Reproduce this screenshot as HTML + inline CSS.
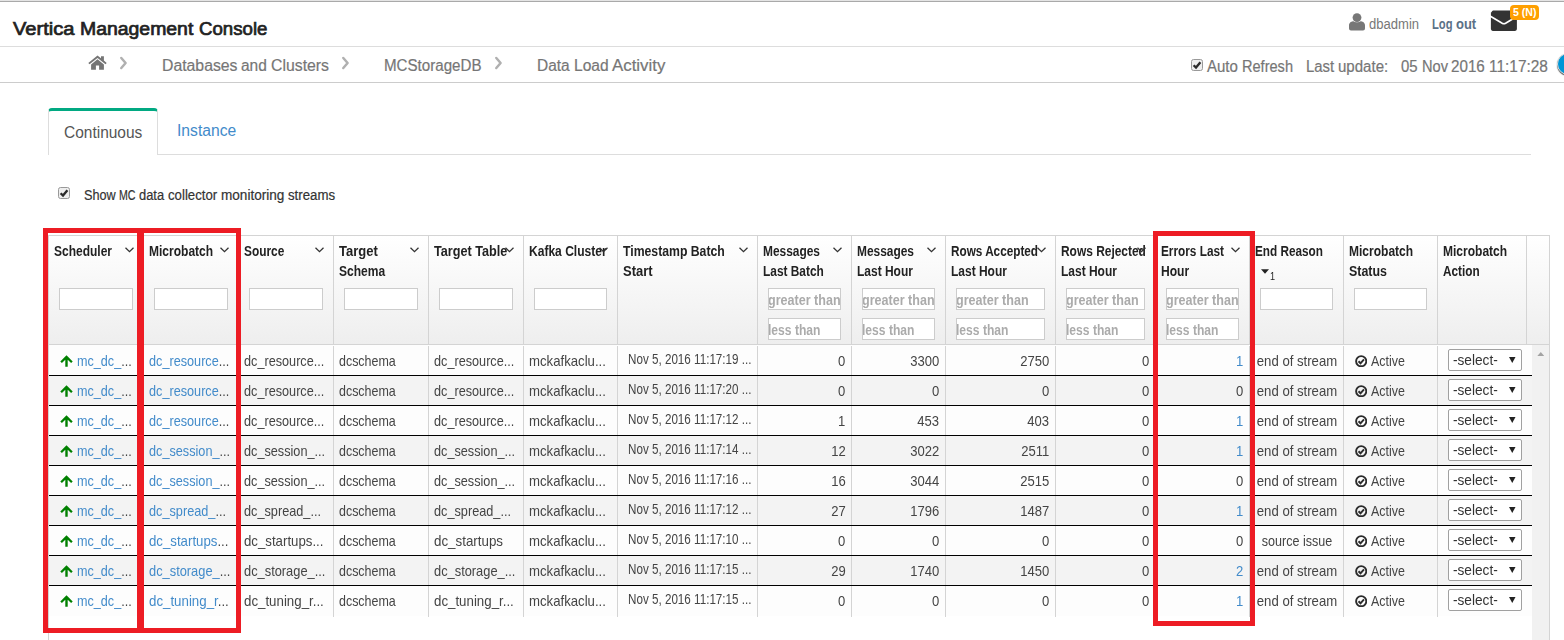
<!DOCTYPE html>
<html lang="en"><head><meta charset="utf-8"><title>Vertica Management Console</title>
<style>
html,body{margin:0;padding:0;background:#fff;}
body{width:1564px;height:640px;overflow:hidden;position:relative;font-family:"Liberation Sans",sans-serif;color:#333;}
.a{position:absolute;}
.t{position:absolute;white-space:nowrap;transform-origin:0 0;transform:scaleX(.83);line-height:1;}
.r{position:absolute;white-space:nowrap;transform-origin:100% 0;transform:scaleX(.83);line-height:1;text-align:right;}
.c{position:absolute;white-space:nowrap;transform-origin:50% 0;transform:scaleX(.83);line-height:1;text-align:center;}
.b{font-weight:bold;}
.k{-webkit-text-stroke:0.2px currentColor;}
.lk{color:#428bca;}
.hd{font-size:14px;font-weight:bold;color:#222;}
.d{font-size:15px;color:#444;}
.ts{font-size:14px;color:#444;}
.inp{position:absolute;box-sizing:border-box;border:1px solid #ccc;background:#fff;height:22px;}
.ph{font-size:15.5px;color:#ababab;}
.vl{position:absolute;width:1px;background:#d4d4d4;}
.hl{position:absolute;height:1px;}
.sel{position:absolute;box-sizing:border-box;border:1px solid #a0a0a0;border-radius:2px;background:#fff;width:74px;height:22px;}
.red{position:absolute;box-sizing:border-box;border:5px solid #ed1c24;}
</style></head>
<body>
<div class="hl" style="left:0;top:0px;width:1564px;background:#e4e4e4"></div>
<div class="hl" style="left:0;top:1px;width:1564px;background:#a9a9a9"></div>
<span class="t k" style="left:13.1px;top:19.5px;font-size:18px;color:#222;transform:scaleX(1.1175);-webkit-text-stroke:0.7px #222;">Vertica</span>
<span class="t k" style="left:80.3px;top:19.5px;font-size:18px;color:#222;transform:scaleX(1.0783);-webkit-text-stroke:0.7px #222;">Management</span>
<span class="t k" style="left:199.0px;top:19.5px;font-size:18px;color:#222;transform:scaleX(1.0356);-webkit-text-stroke:0.7px #222;">Console</span>
<div class="hl" style="left:0;top:46px;width:1564px;background:#ddd"></div>
<div class="hl" style="left:0;top:82px;width:1564px;background:#ccc"></div>
<svg class="a" style="left:1349px;top:13px" width="16" height="18" viewBox="0 0 16 18"><circle cx="8" cy="4.6" r="4.4" fill="#777"/><path d="M0 17.5 V12.5 C0 9 3 8.2 4.5 8.2 C6 9.6 10 9.6 11.5 8.2 C13 8.2 16 9 16 12.5 V15.5 Q16 17.5 14 17.5 H2 Q0 17.5 0 15.5 Z" fill="#777"/></svg>
<div class="t" style="left:1369px;top:16.5px;font-size:14px;color:#777;transform:scaleX(.932)">dbadmin</div>
<span class="t b" style="left:1432.0px;top:16.9px;font-size:14px;color:#5b7187;transform:scaleX(0.799);">Log</span>
<span class="t b" style="left:1455.8px;top:16.9px;font-size:14px;color:#5b7187;transform:scaleX(0.928);">out</span>
<svg class="a" style="left:1490px;top:10px" width="28" height="22" viewBox="0 0 28 22"><rect x="0.9" y="0.4" width="26" height="20.5" rx="1.8" fill="#333"/><path d="M-0.5 5.6 L12.2 13.3 Q13.9 14.2 15.6 13.3 L28.3 5.6" fill="none" stroke="#fff" stroke-width="1.7"/><path d="M0 0 H3 L0.4 3.6 Z" fill="#fff"/></svg>
<div class="a" style="left:1510px;top:5px;width:29px;height:15px;background:#ff9f00;border-radius:4px;"></div>
<span class="t b" style="left:1512.6px;top:7.4px;font-size:11.5px;color:#fff;transform:scaleX(0.9195);">5 (N)</span>
<svg class="a" style="left:88px;top:55px" width="19" height="15" viewBox="0 0 19 15"><path d="M9.5 0.5 L0.3 8 L1.5 9.3 L9.5 2.9 L17.5 9.3 L18.7 8 L15.9 5.6 V1.2 H13 V3.3 Z" fill="#757575"/><path d="M9.5 4.3 L3.1 9.4 V14.8 H7.9 V10.6 H11.1 V14.8 H15.9 V9.4 Z" fill="#757575"/></svg>
<svg class="a" style="left:119px;top:56px" width="9" height="14" viewBox="0 0 9 14"><path d="M2.3 2 L6.6 7 L2.3 12" fill="none" stroke="#b0b0b0" stroke-width="2.5" stroke-linecap="round" stroke-linejoin="round"/></svg>
<span class="t k" style="left:161.5px;top:58px;font-size:16px;color:#767676;transform:scaleX(0.987);">Databases</span>
<span class="t k" style="left:240.6px;top:58px;font-size:16px;color:#767676;transform:scaleX(0.9665);">and</span>
<span class="t k" style="left:270.9px;top:58px;font-size:16px;color:#767676;transform:scaleX(0.9884);">Clusters</span>
<svg class="a" style="left:341px;top:56px" width="9" height="14" viewBox="0 0 9 14"><path d="M2.3 2 L6.6 7 L2.3 12" fill="none" stroke="#b0b0b0" stroke-width="2.5" stroke-linecap="round" stroke-linejoin="round"/></svg>
<span class="t k" style="left:384.1px;top:58px;font-size:16px;color:#767676;transform:scaleX(0.9452);">MCStorageDB</span>
<svg class="a" style="left:494px;top:56px" width="9" height="14" viewBox="0 0 9 14"><path d="M2.3 2 L6.6 7 L2.3 12" fill="none" stroke="#b0b0b0" stroke-width="2.5" stroke-linecap="round" stroke-linejoin="round"/></svg>
<span class="t k" style="left:536.6px;top:58px;font-size:16px;color:#767676;transform:scaleX(0.9646);">Data</span>
<span class="t k" style="left:574.0px;top:58px;font-size:16px;color:#767676;transform:scaleX(0.9721);">Load</span>
<span class="t k" style="left:612.4px;top:58px;font-size:16px;color:#767676;transform:scaleX(1.0519);">Activity</span>
<svg class="a" style="left:1191px;top:59px" width="12" height="12" viewBox="0 0 12 12"><rect x="0.5" y="0.5" width="11" height="11" rx="2" fill="#eee" stroke="#999"/><path d="M2.6 6.2 L5 8.6 L9.4 3.2" fill="none" stroke="#2a2a2a" stroke-width="2.3"/></svg>
<span class="t k" style="left:1206.7px;top:58.7px;font-size:16px;color:#767676;transform:scaleX(0.9388);">Auto</span>
<span class="t k" style="left:1241.6px;top:58.7px;font-size:16px;color:#767676;transform:scaleX(0.9103);">Refresh</span>
<span class="t k" style="left:1306.0px;top:58.7px;font-size:16px;color:#767676;transform:scaleX(0.9292);">Last</span>
<span class="t k" style="left:1337.6px;top:58.7px;font-size:16px;color:#767676;transform:scaleX(0.9404);">update:</span>
<span class="t k" style="left:1401.2px;top:58.7px;font-size:16px;color:#767676;transform:scaleX(0.9327);">05</span>
<span class="t k" style="left:1421.8px;top:58.7px;font-size:16px;color:#767676;transform:scaleX(0.9138);">Nov</span>
<span class="t k" style="left:1451.0px;top:58.7px;font-size:16px;color:#767676;transform:scaleX(0.9496);">2016</span>
<span class="t k" style="left:1488.8px;top:58.7px;font-size:16px;color:#767676;transform:scaleX(0.9641);">11:17:28</span>
<div class="a" style="left:1556.5px;top:52.7px;width:22px;height:22px;border-radius:11px;background:#0096d6;border:1.5px solid #ddd;box-sizing:border-box;box-shadow:0 1px 1px #555"></div>
<div class="hl" style="left:48px;top:154px;width:1483px;background:#ddd"></div>
<div class="a" style="left:48px;top:108px;width:110px;height:47px;box-sizing:border-box;border:1px solid #ddd;border-bottom:none;border-top:3px solid #01a982;border-radius:4px 4px 0 0;background:#fff"></div>
<div class="t" style="left:64px;top:125px;font-size:16px;color:#555;transform:scaleX(.9675)">Continuous</div>
<div class="t lk" style="left:176.5px;top:123px;font-size:16px;transform:scaleX(.979)">Instance</div>
<svg class="a" style="left:58px;top:187px" width="12" height="12" viewBox="0 0 12 12"><rect x="0.5" y="0.5" width="11" height="11" rx="2" fill="#eee" stroke="#999"/><path d="M2.6 6.2 L5 8.6 L9.4 3.2" fill="none" stroke="#2a2a2a" stroke-width="2.3"/></svg>
<span class="t k" style="left:84.0px;top:188.3px;font-size:14px;color:#333;transform:scaleX(0.9051);">Show</span>
<span class="t k" style="left:118.9px;top:188.3px;font-size:14px;color:#333;transform:scaleX(0.7578);">MC</span>
<span class="t k" style="left:139.0px;top:188.3px;font-size:14px;color:#333;transform:scaleX(0.921);">data</span>
<span class="t k" style="left:167.6px;top:188.3px;font-size:14px;color:#333;transform:scaleX(0.9437);">collector</span>
<span class="t k" style="left:220.8px;top:188.3px;font-size:14px;color:#333;transform:scaleX(0.9698);">monitoring</span>
<span class="t k" style="left:287.8px;top:188.3px;font-size:14px;color:#333;transform:scaleX(0.946);">streams</span>
<div class="a" style="left:0;top:0;width:1564px;height:640px;will-change:transform">
<div class="a" style="left:48px;top:235px;width:1502px;height:110px;box-sizing:border-box;border:1px solid #d4d4d4;background:linear-gradient(#fff,#eee)"></div>
<div class="vl" style="left:48px;top:235px;height:405px"></div>
<div class="vl" style="left:1549px;top:235px;height:405px"></div>
<div class="a" style="left:1532px;top:345px;width:17px;height:295px;background:#f1f1f1"></div>
<svg class="a" style="left:1536.7px;top:351.8px" width="7.6" height="4.4" viewBox="0 0 7.6 4.4"><path d="M0 4.4 L3.8 0 L7.6 4.4 Z" fill="#a3a3a3"/></svg>
<div class="vl" style="left:143px;top:236px;height:108px"></div>
<div class="vl" style="left:238px;top:236px;height:108px"></div>
<div class="vl" style="left:333px;top:236px;height:108px"></div>
<div class="vl" style="left:428px;top:236px;height:108px"></div>
<div class="vl" style="left:523px;top:236px;height:108px"></div>
<div class="vl" style="left:617px;top:236px;height:108px"></div>
<div class="vl" style="left:757px;top:236px;height:108px"></div>
<div class="vl" style="left:851px;top:236px;height:108px"></div>
<div class="vl" style="left:945px;top:236px;height:108px"></div>
<div class="vl" style="left:1055px;top:236px;height:108px"></div>
<div class="vl" style="left:1155px;top:236px;height:108px"></div>
<div class="vl" style="left:1249px;top:236px;height:108px"></div>
<div class="vl" style="left:1343px;top:236px;height:108px"></div>
<div class="vl" style="left:1437px;top:236px;height:108px"></div>
<div class="vl" style="left:1526px;top:236px;height:108px"></div>
<div class="t hd" style="left:53.5px;top:244.4px;transform:scaleX(0.8568)">Scheduler</div>
<svg class="a" style="left:125px;top:247px" width="9" height="6" viewBox="0 0 9 6"><path d="M0.5 0.7 L4.5 4.7 L8.5 0.7" fill="none" stroke="#333" stroke-width="1.25"/></svg>
<div class="inp" style="left:59px;top:288px;width:74px"></div>
<div class="t hd" style="left:148.5px;top:244.4px;transform:scaleX(0.8583)">Microbatch</div>
<svg class="a" style="left:220px;top:247px" width="9" height="6" viewBox="0 0 9 6"><path d="M0.5 0.7 L4.5 4.7 L8.5 0.7" fill="none" stroke="#333" stroke-width="1.25"/></svg>
<div class="inp" style="left:154px;top:288px;width:74px"></div>
<div class="t hd" style="left:243.5px;top:244.4px;transform:scaleX(0.849)">Source</div>
<svg class="a" style="left:315px;top:247px" width="9" height="6" viewBox="0 0 9 6"><path d="M0.5 0.7 L4.5 4.7 L8.5 0.7" fill="none" stroke="#333" stroke-width="1.25"/></svg>
<div class="inp" style="left:249px;top:288px;width:74px"></div>
<div class="t hd" style="left:338.5px;top:244.4px;transform:scaleX(0.9293)">Target</div>
<div class="t hd" style="left:338.5px;top:264.4px;transform:scaleX(0.8585)">Schema</div>
<svg class="a" style="left:410px;top:247px" width="9" height="6" viewBox="0 0 9 6"><path d="M0.5 0.7 L4.5 4.7 L8.5 0.7" fill="none" stroke="#333" stroke-width="1.25"/></svg>
<div class="inp" style="left:344px;top:288px;width:74px"></div>
<div class="t hd" style="left:433.5px;top:244.4px;transform:scaleX(0.903)">Target Table</div>
<svg class="a" style="left:505px;top:247px" width="9" height="6" viewBox="0 0 9 6"><path d="M0.5 0.7 L4.5 4.7 L8.5 0.7" fill="none" stroke="#333" stroke-width="1.25"/></svg>
<div class="inp" style="left:439px;top:288px;width:74px"></div>
<div class="t hd" style="left:528.5px;top:244.4px;transform:scaleX(0.8608)">Kafka Cluster</div>
<svg class="a" style="left:599px;top:247px" width="9" height="6" viewBox="0 0 9 6"><path d="M0.5 0.7 L4.5 4.7 L8.5 0.7" fill="none" stroke="#333" stroke-width="1.25"/></svg>
<div class="inp" style="left:534px;top:288px;width:73px"></div>
<div class="t hd" style="left:622.5px;top:244.4px;transform:scaleX(0.8741)">Timestamp Batch</div>
<div class="t hd" style="left:622.5px;top:264.4px;transform:scaleX(0.9279)">Start</div>
<svg class="a" style="left:739px;top:247px" width="9" height="6" viewBox="0 0 9 6"><path d="M0.5 0.7 L4.5 4.7 L8.5 0.7" fill="none" stroke="#333" stroke-width="1.25"/></svg>
<div class="t hd" style="left:762.5px;top:244.4px;transform:scaleX(0.8515)">Messages</div>
<div class="t hd" style="left:762.5px;top:264.4px;transform:scaleX(0.8494)">Last Batch</div>
<svg class="a" style="left:833px;top:247px" width="9" height="6" viewBox="0 0 9 6"><path d="M0.5 0.7 L4.5 4.7 L8.5 0.7" fill="none" stroke="#333" stroke-width="1.25"/></svg>
<div class="inp" style="left:768px;top:288px;width:73px;overflow:hidden"><div class="t ph b" style="left:-0.7px;top:3.1px;transform:scaleX(0.8104)">greater than</div></div>
<div class="inp" style="left:768px;top:318px;width:73px;overflow:hidden"><div class="t ph b" style="left:-0.7px;top:3.1px;transform:scaleX(0.7813)">less than</div></div>
<div class="t hd" style="left:856.5px;top:244.4px;transform:scaleX(0.8515)">Messages</div>
<div class="t hd" style="left:856.5px;top:264.4px;transform:scaleX(0.8555)">Last Hour</div>
<svg class="a" style="left:927px;top:247px" width="9" height="6" viewBox="0 0 9 6"><path d="M0.5 0.7 L4.5 4.7 L8.5 0.7" fill="none" stroke="#333" stroke-width="1.25"/></svg>
<div class="inp" style="left:862px;top:288px;width:73px;overflow:hidden"><div class="t ph b" style="left:-0.7px;top:3.1px;transform:scaleX(0.8104)">greater than</div></div>
<div class="inp" style="left:862px;top:318px;width:73px;overflow:hidden"><div class="t ph b" style="left:-0.7px;top:3.1px;transform:scaleX(0.7813)">less than</div></div>
<div class="t hd" style="left:950.5px;top:244.4px;transform:scaleX(0.8386)">Rows Accepted</div>
<div class="t hd" style="left:950.5px;top:264.4px;transform:scaleX(0.8555)">Last Hour</div>
<svg class="a" style="left:1037px;top:247px" width="9" height="6" viewBox="0 0 9 6"><path d="M0.5 0.7 L4.5 4.7 L8.5 0.7" fill="none" stroke="#333" stroke-width="1.25"/></svg>
<div class="inp" style="left:956px;top:288px;width:89px;overflow:hidden"><div class="t ph b" style="left:-0.7px;top:3.1px;transform:scaleX(0.8104)">greater than</div></div>
<div class="inp" style="left:956px;top:318px;width:89px;overflow:hidden"><div class="t ph b" style="left:-0.7px;top:3.1px;transform:scaleX(0.7813)">less than</div></div>
<div class="t hd" style="left:1060.5px;top:244.4px;transform:scaleX(0.8524)">Rows Rejected</div>
<div class="t hd" style="left:1060.5px;top:264.4px;transform:scaleX(0.8555)">Last Hour</div>
<svg class="a" style="left:1137px;top:247px" width="9" height="6" viewBox="0 0 9 6"><path d="M0.5 0.7 L4.5 4.7 L8.5 0.7" fill="none" stroke="#333" stroke-width="1.25"/></svg>
<div class="inp" style="left:1066px;top:288px;width:79px;overflow:hidden"><div class="t ph b" style="left:-0.7px;top:3.1px;transform:scaleX(0.8104)">greater than</div></div>
<div class="inp" style="left:1066px;top:318px;width:79px;overflow:hidden"><div class="t ph b" style="left:-0.7px;top:3.1px;transform:scaleX(0.7813)">less than</div></div>
<div class="t hd" style="left:1160.5px;top:244.4px;transform:scaleX(0.8433)">Errors Last</div>
<div class="t hd" style="left:1160.5px;top:264.4px;transform:scaleX(0.8633)">Hour</div>
<svg class="a" style="left:1231px;top:247px" width="9" height="6" viewBox="0 0 9 6"><path d="M0.5 0.7 L4.5 4.7 L8.5 0.7" fill="none" stroke="#333" stroke-width="1.25"/></svg>
<div class="inp" style="left:1166px;top:288px;width:73px;overflow:hidden"><div class="t ph b" style="left:-0.7px;top:3.1px;transform:scaleX(0.8104)">greater than</div></div>
<div class="inp" style="left:1166px;top:318px;width:73px;overflow:hidden"><div class="t ph b" style="left:-0.7px;top:3.1px;transform:scaleX(0.7813)">less than</div></div>
<div class="t hd" style="left:1254.5px;top:244.4px;transform:scaleX(0.8404)">End Reason</div>
<div class="inp" style="left:1260px;top:288px;width:73px"></div>
<div class="t hd" style="left:1348.5px;top:244.4px;transform:scaleX(0.8583)">Microbatch</div>
<div class="t hd" style="left:1348.5px;top:264.4px;transform:scaleX(0.8857)">Status</div>
<div class="inp" style="left:1354px;top:288px;width:73px"></div>
<div class="t hd" style="left:1442.5px;top:244.4px;transform:scaleX(0.8583)">Microbatch</div>
<div class="t hd" style="left:1442.5px;top:264.4px;transform:scaleX(0.8403)">Action</div>
<svg class="a" style="left:1261px;top:269px" width="8" height="5" viewBox="0 0 8 5"><path d="M0 0.3 H8 L4 4.7 Z" fill="#222"/></svg>
<div class="t" style="left:1269.5px;top:270.5px;font-size:11px;color:#222">1</div>
<div class="a" style="left:49px;top:345px;width:1483px;height:30px;background:#fdfdfd"></div>
<div class="vl" style="left:143px;top:346px;height:29px"></div>
<div class="vl" style="left:238px;top:346px;height:29px"></div>
<div class="vl" style="left:333px;top:346px;height:29px"></div>
<div class="vl" style="left:428px;top:346px;height:29px"></div>
<div class="vl" style="left:523px;top:346px;height:29px"></div>
<div class="vl" style="left:617px;top:346px;height:29px"></div>
<div class="vl" style="left:757px;top:346px;height:29px"></div>
<div class="vl" style="left:851px;top:346px;height:29px"></div>
<div class="vl" style="left:945px;top:346px;height:29px"></div>
<div class="vl" style="left:1055px;top:346px;height:29px"></div>
<div class="vl" style="left:1155px;top:346px;height:29px"></div>
<div class="vl" style="left:1249px;top:346px;height:29px"></div>
<div class="vl" style="left:1343px;top:346px;height:29px"></div>
<div class="vl" style="left:1437px;top:346px;height:29px"></div>
<svg class="a" style="left:60px;top:355px" width="13" height="12" viewBox="0 0 13 12"><path d="M6.5 0.3 L0.3 6.5 L1.9 8.1 L5.3 4.8 V11.7 H7.7 V4.8 L11.1 8.1 L12.7 6.5 Z" fill="#008000"/></svg>
<div class="t d" style="left:77px;top:353px;transform:scaleX(0.8412)"><span class="lk">mc_dc_</span>...</div>
<div class="t d" style="left:149px;top:353px;transform:scaleX(0.8448)"><span class="lk">dc_resource</span>...</div>
<div class="t d" style="left:244px;top:353px;transform:scaleX(0.8448)">dc_resource...</div>
<div class="t d" style="left:339px;top:353px">dcschema</div>
<div class="t d" style="left:434px;top:353px;transform:scaleX(0.8448)">dc_resource...</div>
<div class="t d" style="left:529px;top:353px;transform:scaleX(0.8786)">mckafkaclu...</div>
<div class="t ts" style="left:627.7px;top:352px;transform:scaleX(.832)">Nov 5, 2016 11:17:19 ...</div>
<div class="r d" style="right:718.5px;top:353px;transform:scaleX(.87)">0</div>
<div class="r d" style="right:624.5px;top:353px;transform:scaleX(.87)">3300</div>
<div class="r d" style="right:514.5px;top:353px;transform:scaleX(.87)">2750</div>
<div class="r d" style="right:414.5px;top:353px;transform:scaleX(.87)">0</div>
<div class="r d" style="right:320.5px;top:353px;transform:scaleX(.87)"><span class="lk">1</span></div>
<div class="c d" style="left:1250px;width:94px;top:353px;transform:scaleX(0.877)">end of stream</div>
<svg class="a" style="left:1354.8px;top:354.8px" width="12.4" height="12.4" viewBox="0 0 12.4 12.4"><circle cx="6.2" cy="6.2" r="5.1" fill="none" stroke="#2b2b2b" stroke-width="1.9"/><path d="M3.5 6.3 L5.5 8.3 L9 4.3" fill="none" stroke="#2b2b2b" stroke-width="1.9"/></svg>
<div class="t d" style="left:1371px;top:353px">Active</div>
<div class="sel" style="left:1448px;top:349px"><div class="t d" style="left:4px;top:2px;color:#333;transform:scaleX(.91)">-select-</div><svg class="a" style="left:60px;top:6.8px" width="6.5" height="6" viewBox="0 0 6.5 6"><path d="M0 0 H6.5 L3.25 6 Z" fill="#222"/></svg></div>
<div class="a" style="left:49px;top:375px;width:1483px;height:30px;background:#f3f3f3"></div>
<div class="vl" style="left:143px;top:376px;height:29px"></div>
<div class="vl" style="left:238px;top:376px;height:29px"></div>
<div class="vl" style="left:333px;top:376px;height:29px"></div>
<div class="vl" style="left:428px;top:376px;height:29px"></div>
<div class="vl" style="left:523px;top:376px;height:29px"></div>
<div class="vl" style="left:617px;top:376px;height:29px"></div>
<div class="vl" style="left:757px;top:376px;height:29px"></div>
<div class="vl" style="left:851px;top:376px;height:29px"></div>
<div class="vl" style="left:945px;top:376px;height:29px"></div>
<div class="vl" style="left:1055px;top:376px;height:29px"></div>
<div class="vl" style="left:1155px;top:376px;height:29px"></div>
<div class="vl" style="left:1249px;top:376px;height:29px"></div>
<div class="vl" style="left:1343px;top:376px;height:29px"></div>
<div class="vl" style="left:1437px;top:376px;height:29px"></div>
<svg class="a" style="left:60px;top:385px" width="13" height="12" viewBox="0 0 13 12"><path d="M6.5 0.3 L0.3 6.5 L1.9 8.1 L5.3 4.8 V11.7 H7.7 V4.8 L11.1 8.1 L12.7 6.5 Z" fill="#008000"/></svg>
<div class="t d" style="left:77px;top:383px;transform:scaleX(0.8412)"><span class="lk">mc_dc_</span>...</div>
<div class="t d" style="left:149px;top:383px;transform:scaleX(0.8448)"><span class="lk">dc_resource</span>...</div>
<div class="t d" style="left:244px;top:383px;transform:scaleX(0.8448)">dc_resource...</div>
<div class="t d" style="left:339px;top:383px">dcschema</div>
<div class="t d" style="left:434px;top:383px;transform:scaleX(0.8448)">dc_resource...</div>
<div class="t d" style="left:529px;top:383px;transform:scaleX(0.8786)">mckafkaclu...</div>
<div class="t ts" style="left:627.7px;top:382px;transform:scaleX(.832)">Nov 5, 2016 11:17:20 ...</div>
<div class="r d" style="right:718.5px;top:383px;transform:scaleX(.87)">0</div>
<div class="r d" style="right:624.5px;top:383px;transform:scaleX(.87)">0</div>
<div class="r d" style="right:514.5px;top:383px;transform:scaleX(.87)">0</div>
<div class="r d" style="right:414.5px;top:383px;transform:scaleX(.87)">0</div>
<div class="r d" style="right:320.5px;top:383px;transform:scaleX(.87)">0</div>
<div class="c d" style="left:1250px;width:94px;top:383px;transform:scaleX(0.877)">end of stream</div>
<svg class="a" style="left:1354.8px;top:384.8px" width="12.4" height="12.4" viewBox="0 0 12.4 12.4"><circle cx="6.2" cy="6.2" r="5.1" fill="none" stroke="#2b2b2b" stroke-width="1.9"/><path d="M3.5 6.3 L5.5 8.3 L9 4.3" fill="none" stroke="#2b2b2b" stroke-width="1.9"/></svg>
<div class="t d" style="left:1371px;top:383px">Active</div>
<div class="sel" style="left:1448px;top:379px"><div class="t d" style="left:4px;top:2px;color:#333;transform:scaleX(.91)">-select-</div><svg class="a" style="left:60px;top:6.8px" width="6.5" height="6" viewBox="0 0 6.5 6"><path d="M0 0 H6.5 L3.25 6 Z" fill="#222"/></svg></div>
<div class="a" style="left:49px;top:405px;width:1483px;height:30px;background:#fdfdfd"></div>
<div class="vl" style="left:143px;top:406px;height:29px"></div>
<div class="vl" style="left:238px;top:406px;height:29px"></div>
<div class="vl" style="left:333px;top:406px;height:29px"></div>
<div class="vl" style="left:428px;top:406px;height:29px"></div>
<div class="vl" style="left:523px;top:406px;height:29px"></div>
<div class="vl" style="left:617px;top:406px;height:29px"></div>
<div class="vl" style="left:757px;top:406px;height:29px"></div>
<div class="vl" style="left:851px;top:406px;height:29px"></div>
<div class="vl" style="left:945px;top:406px;height:29px"></div>
<div class="vl" style="left:1055px;top:406px;height:29px"></div>
<div class="vl" style="left:1155px;top:406px;height:29px"></div>
<div class="vl" style="left:1249px;top:406px;height:29px"></div>
<div class="vl" style="left:1343px;top:406px;height:29px"></div>
<div class="vl" style="left:1437px;top:406px;height:29px"></div>
<svg class="a" style="left:60px;top:415px" width="13" height="12" viewBox="0 0 13 12"><path d="M6.5 0.3 L0.3 6.5 L1.9 8.1 L5.3 4.8 V11.7 H7.7 V4.8 L11.1 8.1 L12.7 6.5 Z" fill="#008000"/></svg>
<div class="t d" style="left:77px;top:413px;transform:scaleX(0.8412)"><span class="lk">mc_dc_</span>...</div>
<div class="t d" style="left:149px;top:413px;transform:scaleX(0.8448)"><span class="lk">dc_resource</span>...</div>
<div class="t d" style="left:244px;top:413px;transform:scaleX(0.8448)">dc_resource...</div>
<div class="t d" style="left:339px;top:413px">dcschema</div>
<div class="t d" style="left:434px;top:413px;transform:scaleX(0.8448)">dc_resource...</div>
<div class="t d" style="left:529px;top:413px;transform:scaleX(0.8786)">mckafkaclu...</div>
<div class="t ts" style="left:627.7px;top:412px;transform:scaleX(.832)">Nov 5, 2016 11:17:12 ...</div>
<div class="r d" style="right:718.5px;top:413px;transform:scaleX(.87)">1</div>
<div class="r d" style="right:624.5px;top:413px;transform:scaleX(.87)">453</div>
<div class="r d" style="right:514.5px;top:413px;transform:scaleX(.87)">403</div>
<div class="r d" style="right:414.5px;top:413px;transform:scaleX(.87)">0</div>
<div class="r d" style="right:320.5px;top:413px;transform:scaleX(.87)"><span class="lk">1</span></div>
<div class="c d" style="left:1250px;width:94px;top:413px;transform:scaleX(0.877)">end of stream</div>
<svg class="a" style="left:1354.8px;top:414.8px" width="12.4" height="12.4" viewBox="0 0 12.4 12.4"><circle cx="6.2" cy="6.2" r="5.1" fill="none" stroke="#2b2b2b" stroke-width="1.9"/><path d="M3.5 6.3 L5.5 8.3 L9 4.3" fill="none" stroke="#2b2b2b" stroke-width="1.9"/></svg>
<div class="t d" style="left:1371px;top:413px">Active</div>
<div class="sel" style="left:1448px;top:409px"><div class="t d" style="left:4px;top:2px;color:#333;transform:scaleX(.91)">-select-</div><svg class="a" style="left:60px;top:6.8px" width="6.5" height="6" viewBox="0 0 6.5 6"><path d="M0 0 H6.5 L3.25 6 Z" fill="#222"/></svg></div>
<div class="a" style="left:49px;top:435px;width:1483px;height:30px;background:#f3f3f3"></div>
<div class="vl" style="left:143px;top:436px;height:29px"></div>
<div class="vl" style="left:238px;top:436px;height:29px"></div>
<div class="vl" style="left:333px;top:436px;height:29px"></div>
<div class="vl" style="left:428px;top:436px;height:29px"></div>
<div class="vl" style="left:523px;top:436px;height:29px"></div>
<div class="vl" style="left:617px;top:436px;height:29px"></div>
<div class="vl" style="left:757px;top:436px;height:29px"></div>
<div class="vl" style="left:851px;top:436px;height:29px"></div>
<div class="vl" style="left:945px;top:436px;height:29px"></div>
<div class="vl" style="left:1055px;top:436px;height:29px"></div>
<div class="vl" style="left:1155px;top:436px;height:29px"></div>
<div class="vl" style="left:1249px;top:436px;height:29px"></div>
<div class="vl" style="left:1343px;top:436px;height:29px"></div>
<div class="vl" style="left:1437px;top:436px;height:29px"></div>
<svg class="a" style="left:60px;top:445px" width="13" height="12" viewBox="0 0 13 12"><path d="M6.5 0.3 L0.3 6.5 L1.9 8.1 L5.3 4.8 V11.7 H7.7 V4.8 L11.1 8.1 L12.7 6.5 Z" fill="#008000"/></svg>
<div class="t d" style="left:77px;top:443px;transform:scaleX(0.8412)"><span class="lk">mc_dc_</span>...</div>
<div class="t d" style="left:149px;top:443px;transform:scaleX(0.8458)"><span class="lk">dc_session_</span>...</div>
<div class="t d" style="left:244px;top:443px;transform:scaleX(0.8458)">dc_session_...</div>
<div class="t d" style="left:339px;top:443px">dcschema</div>
<div class="t d" style="left:434px;top:443px;transform:scaleX(0.8458)">dc_session_...</div>
<div class="t d" style="left:529px;top:443px;transform:scaleX(0.8786)">mckafkaclu...</div>
<div class="t ts" style="left:627.7px;top:442px;transform:scaleX(.832)">Nov 5, 2016 11:17:14 ...</div>
<div class="r d" style="right:718.5px;top:443px;transform:scaleX(.87)">12</div>
<div class="r d" style="right:624.5px;top:443px;transform:scaleX(.87)">3022</div>
<div class="r d" style="right:514.5px;top:443px;transform:scaleX(.87)">2511</div>
<div class="r d" style="right:414.5px;top:443px;transform:scaleX(.87)">0</div>
<div class="r d" style="right:320.5px;top:443px;transform:scaleX(.87)"><span class="lk">1</span></div>
<div class="c d" style="left:1250px;width:94px;top:443px;transform:scaleX(0.877)">end of stream</div>
<svg class="a" style="left:1354.8px;top:444.8px" width="12.4" height="12.4" viewBox="0 0 12.4 12.4"><circle cx="6.2" cy="6.2" r="5.1" fill="none" stroke="#2b2b2b" stroke-width="1.9"/><path d="M3.5 6.3 L5.5 8.3 L9 4.3" fill="none" stroke="#2b2b2b" stroke-width="1.9"/></svg>
<div class="t d" style="left:1371px;top:443px">Active</div>
<div class="sel" style="left:1448px;top:439px"><div class="t d" style="left:4px;top:2px;color:#333;transform:scaleX(.91)">-select-</div><svg class="a" style="left:60px;top:6.8px" width="6.5" height="6" viewBox="0 0 6.5 6"><path d="M0 0 H6.5 L3.25 6 Z" fill="#222"/></svg></div>
<div class="a" style="left:49px;top:465px;width:1483px;height:30px;background:#fdfdfd"></div>
<div class="vl" style="left:143px;top:466px;height:29px"></div>
<div class="vl" style="left:238px;top:466px;height:29px"></div>
<div class="vl" style="left:333px;top:466px;height:29px"></div>
<div class="vl" style="left:428px;top:466px;height:29px"></div>
<div class="vl" style="left:523px;top:466px;height:29px"></div>
<div class="vl" style="left:617px;top:466px;height:29px"></div>
<div class="vl" style="left:757px;top:466px;height:29px"></div>
<div class="vl" style="left:851px;top:466px;height:29px"></div>
<div class="vl" style="left:945px;top:466px;height:29px"></div>
<div class="vl" style="left:1055px;top:466px;height:29px"></div>
<div class="vl" style="left:1155px;top:466px;height:29px"></div>
<div class="vl" style="left:1249px;top:466px;height:29px"></div>
<div class="vl" style="left:1343px;top:466px;height:29px"></div>
<div class="vl" style="left:1437px;top:466px;height:29px"></div>
<svg class="a" style="left:60px;top:475px" width="13" height="12" viewBox="0 0 13 12"><path d="M6.5 0.3 L0.3 6.5 L1.9 8.1 L5.3 4.8 V11.7 H7.7 V4.8 L11.1 8.1 L12.7 6.5 Z" fill="#008000"/></svg>
<div class="t d" style="left:77px;top:473px;transform:scaleX(0.8412)"><span class="lk">mc_dc_</span>...</div>
<div class="t d" style="left:149px;top:473px;transform:scaleX(0.8458)"><span class="lk">dc_session_</span>...</div>
<div class="t d" style="left:244px;top:473px;transform:scaleX(0.8458)">dc_session_...</div>
<div class="t d" style="left:339px;top:473px">dcschema</div>
<div class="t d" style="left:434px;top:473px;transform:scaleX(0.8458)">dc_session_...</div>
<div class="t d" style="left:529px;top:473px;transform:scaleX(0.8786)">mckafkaclu...</div>
<div class="t ts" style="left:627.7px;top:472px;transform:scaleX(.832)">Nov 5, 2016 11:17:16 ...</div>
<div class="r d" style="right:718.5px;top:473px;transform:scaleX(.87)">16</div>
<div class="r d" style="right:624.5px;top:473px;transform:scaleX(.87)">3044</div>
<div class="r d" style="right:514.5px;top:473px;transform:scaleX(.87)">2515</div>
<div class="r d" style="right:414.5px;top:473px;transform:scaleX(.87)">0</div>
<div class="r d" style="right:320.5px;top:473px;transform:scaleX(.87)">0</div>
<div class="c d" style="left:1250px;width:94px;top:473px;transform:scaleX(0.877)">end of stream</div>
<svg class="a" style="left:1354.8px;top:474.8px" width="12.4" height="12.4" viewBox="0 0 12.4 12.4"><circle cx="6.2" cy="6.2" r="5.1" fill="none" stroke="#2b2b2b" stroke-width="1.9"/><path d="M3.5 6.3 L5.5 8.3 L9 4.3" fill="none" stroke="#2b2b2b" stroke-width="1.9"/></svg>
<div class="t d" style="left:1371px;top:473px">Active</div>
<div class="sel" style="left:1448px;top:469px"><div class="t d" style="left:4px;top:2px;color:#333;transform:scaleX(.91)">-select-</div><svg class="a" style="left:60px;top:6.8px" width="6.5" height="6" viewBox="0 0 6.5 6"><path d="M0 0 H6.5 L3.25 6 Z" fill="#222"/></svg></div>
<div class="a" style="left:49px;top:495px;width:1483px;height:30px;background:#f3f3f3"></div>
<div class="vl" style="left:143px;top:496px;height:29px"></div>
<div class="vl" style="left:238px;top:496px;height:29px"></div>
<div class="vl" style="left:333px;top:496px;height:29px"></div>
<div class="vl" style="left:428px;top:496px;height:29px"></div>
<div class="vl" style="left:523px;top:496px;height:29px"></div>
<div class="vl" style="left:617px;top:496px;height:29px"></div>
<div class="vl" style="left:757px;top:496px;height:29px"></div>
<div class="vl" style="left:851px;top:496px;height:29px"></div>
<div class="vl" style="left:945px;top:496px;height:29px"></div>
<div class="vl" style="left:1055px;top:496px;height:29px"></div>
<div class="vl" style="left:1155px;top:496px;height:29px"></div>
<div class="vl" style="left:1249px;top:496px;height:29px"></div>
<div class="vl" style="left:1343px;top:496px;height:29px"></div>
<div class="vl" style="left:1437px;top:496px;height:29px"></div>
<svg class="a" style="left:60px;top:505px" width="13" height="12" viewBox="0 0 13 12"><path d="M6.5 0.3 L0.3 6.5 L1.9 8.1 L5.3 4.8 V11.7 H7.7 V4.8 L11.1 8.1 L12.7 6.5 Z" fill="#008000"/></svg>
<div class="t d" style="left:77px;top:503px;transform:scaleX(0.8412)"><span class="lk">mc_dc_</span>...</div>
<div class="t d" style="left:149px;top:503px;transform:scaleX(0.8472)"><span class="lk">dc_spread_</span>...</div>
<div class="t d" style="left:244px;top:503px;transform:scaleX(0.8472)">dc_spread_...</div>
<div class="t d" style="left:339px;top:503px">dcschema</div>
<div class="t d" style="left:434px;top:503px;transform:scaleX(0.8472)">dc_spread_...</div>
<div class="t d" style="left:529px;top:503px;transform:scaleX(0.8786)">mckafkaclu...</div>
<div class="t ts" style="left:627.7px;top:502px;transform:scaleX(.832)">Nov 5, 2016 11:17:12 ...</div>
<div class="r d" style="right:718.5px;top:503px;transform:scaleX(.87)">27</div>
<div class="r d" style="right:624.5px;top:503px;transform:scaleX(.87)">1796</div>
<div class="r d" style="right:514.5px;top:503px;transform:scaleX(.87)">1487</div>
<div class="r d" style="right:414.5px;top:503px;transform:scaleX(.87)">0</div>
<div class="r d" style="right:320.5px;top:503px;transform:scaleX(.87)"><span class="lk">1</span></div>
<div class="c d" style="left:1250px;width:94px;top:503px;transform:scaleX(0.877)">end of stream</div>
<svg class="a" style="left:1354.8px;top:504.8px" width="12.4" height="12.4" viewBox="0 0 12.4 12.4"><circle cx="6.2" cy="6.2" r="5.1" fill="none" stroke="#2b2b2b" stroke-width="1.9"/><path d="M3.5 6.3 L5.5 8.3 L9 4.3" fill="none" stroke="#2b2b2b" stroke-width="1.9"/></svg>
<div class="t d" style="left:1371px;top:503px">Active</div>
<div class="sel" style="left:1448px;top:499px"><div class="t d" style="left:4px;top:2px;color:#333;transform:scaleX(.91)">-select-</div><svg class="a" style="left:60px;top:6.8px" width="6.5" height="6" viewBox="0 0 6.5 6"><path d="M0 0 H6.5 L3.25 6 Z" fill="#222"/></svg></div>
<div class="a" style="left:49px;top:525px;width:1483px;height:30px;background:#fdfdfd"></div>
<div class="vl" style="left:143px;top:526px;height:29px"></div>
<div class="vl" style="left:238px;top:526px;height:29px"></div>
<div class="vl" style="left:333px;top:526px;height:29px"></div>
<div class="vl" style="left:428px;top:526px;height:29px"></div>
<div class="vl" style="left:523px;top:526px;height:29px"></div>
<div class="vl" style="left:617px;top:526px;height:29px"></div>
<div class="vl" style="left:757px;top:526px;height:29px"></div>
<div class="vl" style="left:851px;top:526px;height:29px"></div>
<div class="vl" style="left:945px;top:526px;height:29px"></div>
<div class="vl" style="left:1055px;top:526px;height:29px"></div>
<div class="vl" style="left:1155px;top:526px;height:29px"></div>
<div class="vl" style="left:1249px;top:526px;height:29px"></div>
<div class="vl" style="left:1343px;top:526px;height:29px"></div>
<div class="vl" style="left:1437px;top:526px;height:29px"></div>
<svg class="a" style="left:60px;top:535px" width="13" height="12" viewBox="0 0 13 12"><path d="M6.5 0.3 L0.3 6.5 L1.9 8.1 L5.3 4.8 V11.7 H7.7 V4.8 L11.1 8.1 L12.7 6.5 Z" fill="#008000"/></svg>
<div class="t d" style="left:77px;top:533px;transform:scaleX(0.8412)"><span class="lk">mc_dc_</span>...</div>
<div class="t d" style="left:149px;top:533px;transform:scaleX(0.8818)"><span class="lk">dc_startups</span>...</div>
<div class="t d" style="left:244px;top:533px;transform:scaleX(0.8818)">dc_startups...</div>
<div class="t d" style="left:339px;top:533px">dcschema</div>
<div class="t d" style="left:434px;top:533px;transform:scaleX(0.8899)">dc_startups</div>
<div class="t d" style="left:529px;top:533px;transform:scaleX(0.8786)">mckafkaclu...</div>
<div class="t ts" style="left:627.7px;top:532px;transform:scaleX(.832)">Nov 5, 2016 11:17:10 ...</div>
<div class="r d" style="right:718.5px;top:533px;transform:scaleX(.87)">0</div>
<div class="r d" style="right:624.5px;top:533px;transform:scaleX(.87)">0</div>
<div class="r d" style="right:514.5px;top:533px;transform:scaleX(.87)">0</div>
<div class="r d" style="right:414.5px;top:533px;transform:scaleX(.87)">0</div>
<div class="r d" style="right:320.5px;top:533px;transform:scaleX(.87)">0</div>
<div class="c d" style="left:1250px;width:94px;top:533px;transform:scaleX(0.838)">source issue</div>
<svg class="a" style="left:1354.8px;top:534.8px" width="12.4" height="12.4" viewBox="0 0 12.4 12.4"><circle cx="6.2" cy="6.2" r="5.1" fill="none" stroke="#2b2b2b" stroke-width="1.9"/><path d="M3.5 6.3 L5.5 8.3 L9 4.3" fill="none" stroke="#2b2b2b" stroke-width="1.9"/></svg>
<div class="t d" style="left:1371px;top:533px">Active</div>
<div class="sel" style="left:1448px;top:529px"><div class="t d" style="left:4px;top:2px;color:#333;transform:scaleX(.91)">-select-</div><svg class="a" style="left:60px;top:6.8px" width="6.5" height="6" viewBox="0 0 6.5 6"><path d="M0 0 H6.5 L3.25 6 Z" fill="#222"/></svg></div>
<div class="a" style="left:49px;top:555px;width:1483px;height:30px;background:#f3f3f3"></div>
<div class="vl" style="left:143px;top:556px;height:29px"></div>
<div class="vl" style="left:238px;top:556px;height:29px"></div>
<div class="vl" style="left:333px;top:556px;height:29px"></div>
<div class="vl" style="left:428px;top:556px;height:29px"></div>
<div class="vl" style="left:523px;top:556px;height:29px"></div>
<div class="vl" style="left:617px;top:556px;height:29px"></div>
<div class="vl" style="left:757px;top:556px;height:29px"></div>
<div class="vl" style="left:851px;top:556px;height:29px"></div>
<div class="vl" style="left:945px;top:556px;height:29px"></div>
<div class="vl" style="left:1055px;top:556px;height:29px"></div>
<div class="vl" style="left:1155px;top:556px;height:29px"></div>
<div class="vl" style="left:1249px;top:556px;height:29px"></div>
<div class="vl" style="left:1343px;top:556px;height:29px"></div>
<div class="vl" style="left:1437px;top:556px;height:29px"></div>
<svg class="a" style="left:60px;top:565px" width="13" height="12" viewBox="0 0 13 12"><path d="M6.5 0.3 L0.3 6.5 L1.9 8.1 L5.3 4.8 V11.7 H7.7 V4.8 L11.1 8.1 L12.7 6.5 Z" fill="#008000"/></svg>
<div class="t d" style="left:77px;top:563px;transform:scaleX(0.8412)"><span class="lk">mc_dc_</span>...</div>
<div class="t d" style="left:149px;top:563px;transform:scaleX(0.8563)"><span class="lk">dc_storage_</span>...</div>
<div class="t d" style="left:244px;top:563px;transform:scaleX(0.8563)">dc_storage_...</div>
<div class="t d" style="left:339px;top:563px">dcschema</div>
<div class="t d" style="left:434px;top:563px;transform:scaleX(0.8563)">dc_storage_...</div>
<div class="t d" style="left:529px;top:563px;transform:scaleX(0.8786)">mckafkaclu...</div>
<div class="t ts" style="left:627.7px;top:562px;transform:scaleX(.832)">Nov 5, 2016 11:17:15 ...</div>
<div class="r d" style="right:718.5px;top:563px;transform:scaleX(.87)">29</div>
<div class="r d" style="right:624.5px;top:563px;transform:scaleX(.87)">1740</div>
<div class="r d" style="right:514.5px;top:563px;transform:scaleX(.87)">1450</div>
<div class="r d" style="right:414.5px;top:563px;transform:scaleX(.87)">0</div>
<div class="r d" style="right:320.5px;top:563px;transform:scaleX(.87)"><span class="lk">2</span></div>
<div class="c d" style="left:1250px;width:94px;top:563px;transform:scaleX(0.877)">end of stream</div>
<svg class="a" style="left:1354.8px;top:564.8px" width="12.4" height="12.4" viewBox="0 0 12.4 12.4"><circle cx="6.2" cy="6.2" r="5.1" fill="none" stroke="#2b2b2b" stroke-width="1.9"/><path d="M3.5 6.3 L5.5 8.3 L9 4.3" fill="none" stroke="#2b2b2b" stroke-width="1.9"/></svg>
<div class="t d" style="left:1371px;top:563px">Active</div>
<div class="sel" style="left:1448px;top:559px"><div class="t d" style="left:4px;top:2px;color:#333;transform:scaleX(.91)">-select-</div><svg class="a" style="left:60px;top:6.8px" width="6.5" height="6" viewBox="0 0 6.5 6"><path d="M0 0 H6.5 L3.25 6 Z" fill="#222"/></svg></div>
<div class="a" style="left:49px;top:585px;width:1483px;height:31px;background:#fdfdfd"></div>
<div class="vl" style="left:143px;top:586px;height:31px"></div>
<div class="vl" style="left:238px;top:586px;height:31px"></div>
<div class="vl" style="left:333px;top:586px;height:31px"></div>
<div class="vl" style="left:428px;top:586px;height:31px"></div>
<div class="vl" style="left:523px;top:586px;height:31px"></div>
<div class="vl" style="left:617px;top:586px;height:31px"></div>
<div class="vl" style="left:757px;top:586px;height:31px"></div>
<div class="vl" style="left:851px;top:586px;height:31px"></div>
<div class="vl" style="left:945px;top:586px;height:31px"></div>
<div class="vl" style="left:1055px;top:586px;height:31px"></div>
<div class="vl" style="left:1155px;top:586px;height:31px"></div>
<div class="vl" style="left:1249px;top:586px;height:31px"></div>
<div class="vl" style="left:1343px;top:586px;height:31px"></div>
<div class="vl" style="left:1437px;top:586px;height:31px"></div>
<svg class="a" style="left:60px;top:595px" width="13" height="12" viewBox="0 0 13 12"><path d="M6.5 0.3 L0.3 6.5 L1.9 8.1 L5.3 4.8 V11.7 H7.7 V4.8 L11.1 8.1 L12.7 6.5 Z" fill="#008000"/></svg>
<div class="t d" style="left:77px;top:593px;transform:scaleX(0.8412)"><span class="lk">mc_dc_</span>...</div>
<div class="t d" style="left:149px;top:593px;transform:scaleX(0.886)"><span class="lk">dc_tuning_r</span>...</div>
<div class="t d" style="left:244px;top:593px;transform:scaleX(0.886)">dc_tuning_r...</div>
<div class="t d" style="left:339px;top:593px">dcschema</div>
<div class="t d" style="left:434px;top:593px;transform:scaleX(0.886)">dc_tuning_r...</div>
<div class="t d" style="left:529px;top:593px;transform:scaleX(0.8786)">mckafkaclu...</div>
<div class="t ts" style="left:627.7px;top:592px;transform:scaleX(.832)">Nov 5, 2016 11:17:15 ...</div>
<div class="r d" style="right:718.5px;top:593px;transform:scaleX(.87)">0</div>
<div class="r d" style="right:624.5px;top:593px;transform:scaleX(.87)">0</div>
<div class="r d" style="right:514.5px;top:593px;transform:scaleX(.87)">0</div>
<div class="r d" style="right:414.5px;top:593px;transform:scaleX(.87)">0</div>
<div class="r d" style="right:320.5px;top:593px;transform:scaleX(.87)"><span class="lk">1</span></div>
<div class="c d" style="left:1250px;width:94px;top:593px;transform:scaleX(0.877)">end of stream</div>
<svg class="a" style="left:1354.8px;top:594.8px" width="12.4" height="12.4" viewBox="0 0 12.4 12.4"><circle cx="6.2" cy="6.2" r="5.1" fill="none" stroke="#2b2b2b" stroke-width="1.9"/><path d="M3.5 6.3 L5.5 8.3 L9 4.3" fill="none" stroke="#2b2b2b" stroke-width="1.9"/></svg>
<div class="t d" style="left:1371px;top:593px">Active</div>
<div class="sel" style="left:1448px;top:589px"><div class="t d" style="left:4px;top:2px;color:#333;transform:scaleX(.91)">-select-</div><svg class="a" style="left:60px;top:6.8px" width="6.5" height="6" viewBox="0 0 6.5 6"><path d="M0 0 H6.5 L3.25 6 Z" fill="#222"/></svg></div>
<div class="hl" style="left:49px;top:375px;width:1483px;background:#000"></div>
<div class="hl" style="left:49px;top:405px;width:1483px;background:#000"></div>
<div class="hl" style="left:49px;top:435px;width:1483px;background:#000"></div>
<div class="hl" style="left:49px;top:465px;width:1483px;background:#000"></div>
<div class="hl" style="left:49px;top:495px;width:1483px;background:#000"></div>
<div class="hl" style="left:49px;top:525px;width:1483px;background:#000"></div>
<div class="hl" style="left:49px;top:555px;width:1483px;background:#000"></div>
<div class="hl" style="left:49px;top:585px;width:1483px;background:#000"></div>
</div>
<div class="red" style="left:43px;top:228px;width:99px;height:405px"></div>
<div class="red" style="left:139px;top:228px;width:102px;height:405px"></div>
<div class="red" style="left:1153px;top:231px;width:102px;height:395px"></div>
</body></html>
